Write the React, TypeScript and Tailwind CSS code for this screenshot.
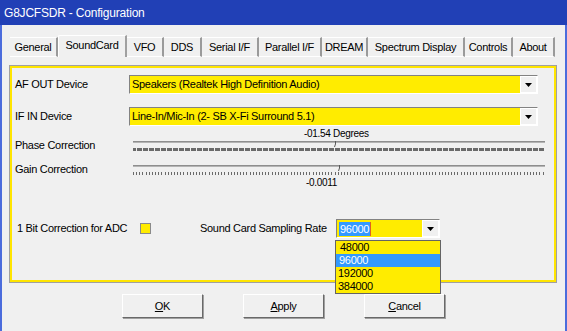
import React from 'react'

const tabs = [
  { name: 'General', w: 'w-[48px]' },
  { name: 'SoundCard', w: 'w-[69px]', active: true },
  { name: 'VFO', w: 'w-[37px]' },
  { name: 'DDS', w: 'w-[38px]' },
  { name: 'Serial I/F', w: 'w-[57px]' },
  { name: 'Parallel I/F', w: 'w-[63px]' },
  { name: 'DREAM', w: 'w-[46px]' },
  { name: 'Spectrum Display', w: 'w-[97px]' },
  { name: 'Controls', w: 'w-[48px]' },
  { name: 'About', w: 'w-[42px]' },
]

function Arrow() {
  return (
    <svg width="7" height="4" viewBox="0 0 7 4">
      <path d="M0 0h7L3.5 4z" fill="#000" />
    </svg>
  )
}

function Combo({ text, className }: { text: string; className: string }) {
  return (
    <div className={`flex h-[19px] border border-t-[#828282] border-l-[#828282] border-r-white border-b-white ${className}`}>
      <div className="flex-1 bg-[#ffec00] pl-[2px] leading-[17px] whitespace-nowrap overflow-hidden">{text}</div>
      <div className="w-[17px] bg-[#f0f0f0] flex items-center justify-center border border-white">
        <Arrow />
      </div>
    </div>
  )
}

function Trackbar({ step, thumb }: { step: number; thumb: number }) {
  const w = 413
  const ticks: number[] = []
  for (let i = 0; i * step < w - 2; i++) ticks.push(Math.round(i * step))
  return (
    <svg width={w} height="12" viewBox={`0 0 ${w} 12`} className="block">
      <rect x="0" y="2" width={w - 1} height="1" fill="#8e8e8e" />
      <rect x="0" y="3" width={w - 1} height="1" fill="#b4b4b4" />
      {ticks.map((x) => (
        <rect key={x} x={x} y="9" width="1" height="3" fill="#6a6a6a" />
      ))}
      <path d={`M${thumb + 0.5} 2V5L${thumb - 0.5} 8`} stroke="#5a5a5a" strokeWidth="1" fill="none" />
    </svg>
  )
}

export default function App() {
  return (
    <div className="w-[567px] h-[331px] flex flex-col bg-[#f0f0f0] overflow-hidden text-[11px] tracking-[-0.3px] text-black font-['Liberation_Sans',Arial,sans-serif]">
      {/* title bar */}
      <div className="h-[25px] shrink-0 bg-[#2140b6] text-white text-[12px] tracking-[-0.2px] pl-[4px] flex items-center">
        G8JCFSDR - Configuration
      </div>

      <div className="flex-1 flex flex-col border-x-2 border-[#4b6cdc]">
        {/* tabs */}
        <div className="mt-[10px] ml-[8px] h-[22px] flex items-end">
          {tabs.map((t) =>
            t.active ? (
              <div
                key={t.name}
                className={`${t.w} h-[22px] flex items-center justify-center pb-[2px] border-t border-l border-white border-r-2 border-r-[#a0a0a0] rounded-tl-[2px]`}
              >
                {t.name}
              </div>
            ) : (
              <div
                key={t.name}
                className={`${t.w} h-[20px] flex items-center justify-center border-t border-white border-b border-b-white border-r-2 border-r-[#9a9a9a]`}
              >
                {t.name}
              </div>
            )
          )}
        </div>

        {/* tab page */}
        <div className="ml-[7px] mt-[8px] w-[548px] h-[218px] border border-[#a0a0a0]">
          <div className="h-full border-2 border-[#ffe500] flex flex-col">
            <div className="flex items-center mt-[7px] pl-[3px]">
              <div className="w-[114px]">AF OUT Device</div>
              <Combo text="Speakers (Realtek High Definition Audio)" className="w-[409px]" />
            </div>
            <div className="flex items-center mt-[13px] pl-[3px]">
              <div className="w-[114px]">IF IN Device</div>
              <Combo text="Line-In/Mic-In (2- SB X-Fi Surround 5.1)" className="w-[409px]" />
            </div>
            <div className="mt-[2px] h-[11px] leading-[11px] text-[10px] pl-[292px]">-01.54 Degrees</div>
            <div className="flex items-center h-[12px] pl-[3px]">
              <div className="w-[118px]">Phase Correction</div>
              <Trackbar step={1.2} thumb={202} />
            </div>
            <div className="flex items-center h-[12px] mt-[12px] pl-[3px]">
              <div className="w-[118px]">Gain Correction</div>
              <Trackbar step={3.15} thumb={206} />
            </div>
            <div className="mt-[2px] h-[11px] leading-[11px] text-[10px] pl-[294px]">-0.0011</div>

            <div className="flex items-center mt-[31px] h-[19px] pl-[5px]">
              <div className="w-[123px]">1 Bit Correction for ADC</div>
              <div className="w-[11px] h-[11px] bg-[#ffec00] border border-[#8a8a8a]" />
              <div className="ml-[49px] w-[136px]">Sound Card Sampling Rate</div>
              <div className="relative">
                <div className="flex h-[19px] w-[104px] border border-t-[#828282] border-l-[#828282] border-r-white border-b-white">
                  <div className="flex-1 bg-[#ffec00] flex items-center pl-[2px]">
                    <span className="bg-[#3399ff] text-white leading-[14px] px-[1px] border-r border-r-[#e06020]">96000</span>
                  </div>
                  <div className="w-[17px] bg-[#f0f0f0] flex items-center justify-center border border-white">
                    <Arrow />
                  </div>
                </div>
                {/* open drop-down list */}
                <div className="absolute left-[-1px] top-[21px] w-[106px] border border-[#646464] bg-[#ffec00] z-10">
                  <div className="h-[13px] leading-[13px] pl-[4px]">48000</div>
                  <div className="h-[13px] leading-[13px] pl-[3px] bg-[#3399ff] text-white">96000</div>
                  <div className="h-[13px] leading-[13px] pl-[2px]">192000</div>
                  <div className="h-[13px] leading-[13px] pl-[2px]">384000</div>
                </div>
              </div>
            </div>
          </div>
        </div>

        {/* buttons */}
        <div className="flex gap-[40px] ml-[120px] mt-[11px]">
          {[
            ['O', 'K'],
            ['A', 'pply'],
            ['C', 'ancel'],
          ].map(([u, rest]) => (
            <div
              key={u + rest}
              className="w-[81px] h-[24px] flex items-center justify-center border border-t-white border-l-white border-r-[#696969] border-b-[#696969] shadow-[1px_1px_0_#a0a0a0]"
            >
              <span className="underline underline-offset-1">{u}</span>
              {rest}
            </div>
          ))}
        </div>
      </div>
    </div>
  )
}
